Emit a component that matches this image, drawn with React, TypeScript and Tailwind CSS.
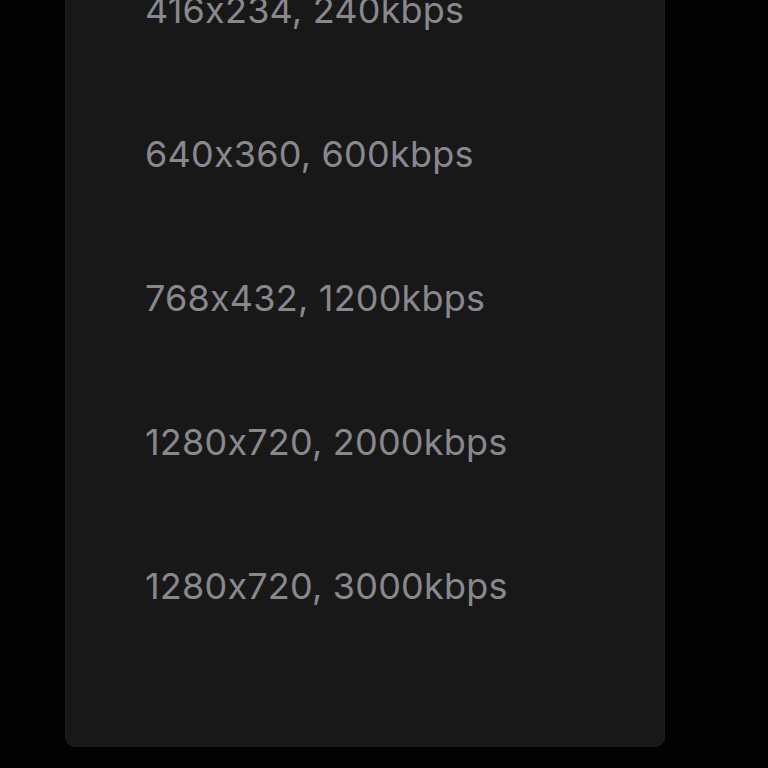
const renditions = [
  '416x234, 240kbps',
  '640x360, 600kbps',
  '768x432, 1200kbps',
  '1280x720, 2000kbps',
  '1280x720, 3000kbps',
];

export default function App() {
  return (
    <div className="h-[768px] w-[768px] overflow-hidden bg-[#030303]">
      <div className="ml-[65px] mt-[-99px] w-[600px] rounded-[10px] border border-[#1d1d1d] bg-[#181818] pb-[88px] pl-[79px] pt-[36px] shadow-[0_2px_6px_rgba(0,0,0,0.6)]">
        {renditions.map((label) => (
          <div
            key={label}
            className="flex h-[144px] items-center font-['Inter',sans-serif] text-[36px] font-normal tracking-[0.2px] text-[#88888e] [font-feature-settings:'calt'_0]"
          >
            {label}
          </div>
        ))}
      </div>
    </div>
  );
}
